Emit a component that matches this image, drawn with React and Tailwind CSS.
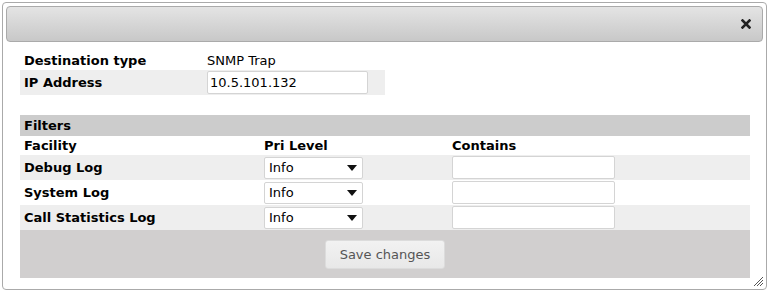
import { useState } from 'react'

const rows = ['Debug Log', 'System Log', 'Call Statistics Log']

function LevelSelect() {
  return (
    <div className="relative w-[99px] h-[22px]">
      <select
        defaultValue="Info"
        className="appearance-none w-full h-full bg-white border border-[#d4d4d4] rounded-[2px] pl-[4px] text-[13px] text-black outline-none"
      >
        <option>Info</option>
        <option>Debug</option>
        <option>Warning</option>
        <option>Error</option>
      </select>
      <svg className="absolute right-[6px] top-[8px] pointer-events-none" width="10" height="6" viewBox="0 0 10 6">
        <path d="M0 0 L10 0 L5 6 Z" fill="#111" />
      </svg>
    </div>
  )
}

export default function App() {
  const [ip, setIp] = useState('10.5.101.132')

  return (
    <div className="w-[769px] h-[292px] bg-white overflow-hidden pt-[2px] pl-[2px]" style={{ fontFamily: '"DejaVu Sans", Verdana, sans-serif' }}>
      <div className="relative w-[765px] h-[288px] border border-[#aaaaaa] rounded-[4px] bg-white p-[3px]">
        {/* title bar */}
        <div className="h-[36px] border border-[#aaaaaa] rounded-[4px] bg-gradient-to-b from-[#e4e4e4] to-[#c8c8c8] flex items-center justify-end pr-[11px]">
          <svg width="10" height="10" viewBox="0 0 10 10">
            <path d="M1.5 1.5 L8.5 8.5 M8.5 1.5 L1.5 8.5" stroke="#222" strokeWidth="2.6" strokeLinecap="square" />
          </svg>
        </div>

        <div className="pl-[14px] pt-[10px] text-[13px] text-black">
          {/* destination */}
          <div className="w-[365px]">
            <div className="flex items-center h-[18px]">
              <div className="w-[187px] pl-[4px] font-bold">Destination type</div>
              <div>SNMP Trap</div>
            </div>
            <div className="flex items-center h-[25px] bg-[#eeeeee]">
              <div className="w-[187px] pl-[4px] font-bold">IP Address</div>
              <input
                value={ip}
                onChange={(e) => setIp(e.target.value)}
                className="w-[161px] h-[23px] bg-white border border-[#d4d4d4] rounded-[2px] pl-[2px] text-[13px] outline-none"
              />
            </div>
          </div>

          {/* filters */}
          <div className="w-[730px] mt-[20px]">
            <div className="h-[21px] bg-[#cccccc] flex items-center pl-[4px] font-bold">Filters</div>
            <div className="h-[19px] flex items-center font-bold">
              <div className="w-[244px] pl-[4px]">Facility</div>
              <div className="w-[188px]">Pri Level</div>
              <div>Contains</div>
            </div>
            {rows.map((name, i) => (
              <div key={name} className={'h-[25px] flex items-center ' + (i % 2 === 0 ? 'bg-[#eeeeee]' : 'bg-white')}>
                <div className="w-[244px] pl-[4px] font-bold">{name}</div>
                <div className="w-[188px]">
                  <LevelSelect />
                </div>
                <input className="w-[163px] h-[23px] bg-white border border-[#d4d4d4] rounded-[2px] outline-none" />
              </div>
            ))}
            <div className="h-[48px] bg-[#d1cfcf] flex items-start justify-center pt-[10px]">
              <button className="w-[120px] h-[29px] rounded-[3px] border border-[#dcdcdc] bg-gradient-to-b from-[#f2f2f2] to-[#e8e8e8] text-[13px] text-[#555555]">
                Save changes
              </button>
            </div>
          </div>
        </div>

        {/* resize grip */}
        <svg className="absolute right-[2px] bottom-[2px]" width="11" height="11" viewBox="0 0 11 11">
          <path d="M10 1 L1 10 M10 4 L4 10 M10 7 L7 10" stroke="#555" strokeWidth="1" />
        </svg>
      </div>
    </div>
  )
}
